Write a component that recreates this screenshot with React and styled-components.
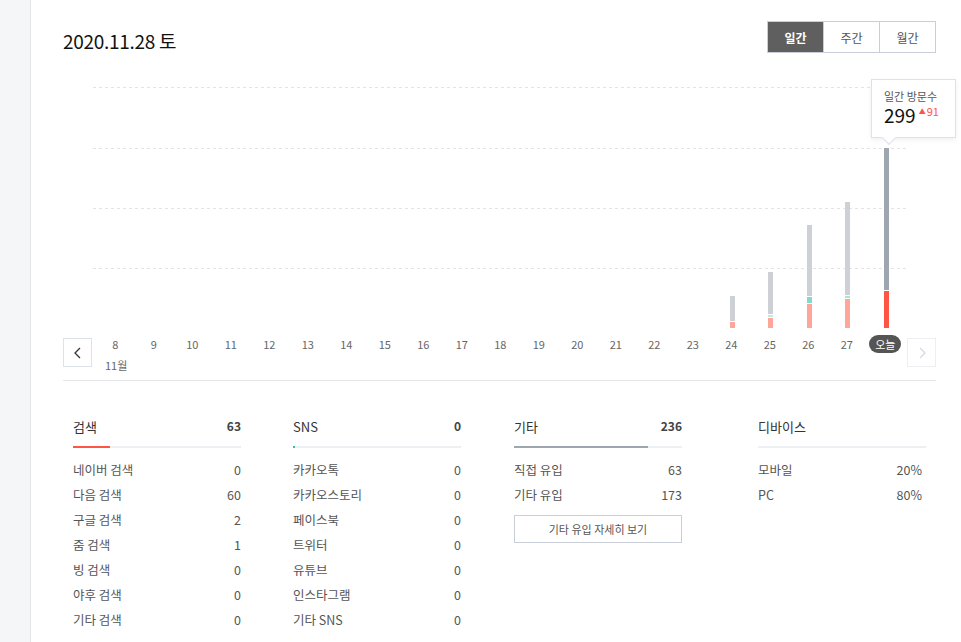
import React from "react";
import styled, { createGlobalStyle } from "styled-components";

const Global = createGlobalStyle`
  body { margin: 0; background: #fff; font-family: "Noto Sans CJK KR", "Noto Sans", sans-serif; color: #333; }
`;

const Page = styled.div`
  display: flex;
  height: 642px;
  overflow: hidden;
`;

const Side = styled.div`
  width: 30px;
  background: #f5f6f8;
  border-right: 1px solid #e4e6ea;
`;

const Main = styled.div`
  width: 873px;
  padding: 21px 0 0 32px;
`;

const Head = styled.div`
  display: flex;
  justify-content: space-between;
  align-items: flex-start;
`;

const Title = styled.h1`
  margin: 6px 0 0;
  font-size: 19px;
  font-weight: 400;
  color: #111;
  letter-spacing: -0.3px;
`;

const Toggle = styled.div`
  display: flex;
  border: 1px solid #c9ced8;
`;

const ToggleBtn = styled.div`
  width: 55px;
  height: 30px;
  display: flex;
  align-items: center;
  justify-content: center;
  font-size: 12px;
  background: ${(p) => (p.$on ? "#5f5f5f" : "#fff")};
  color: ${(p) => (p.$on ? "#fff" : "#555")};
  font-weight: ${(p) => (p.$on ? 700 : 400)};
  & + & { border-left: 1px solid #c9ced8; }
`;

const Chart = styled.div`
  position: relative;
  margin: 33px 0 0 30px;
  padding-left: 4px;
  width: 810px;
  height: 241px;
  background: repeating-linear-gradient(to right, #e2e4e8 0 3px, transparent 3px 6px) 0 0 / 100% 1px no-repeat,
    repeating-linear-gradient(to right, #e2e4e8 0 3px, transparent 3px 6px) 0 61px / 100% 1px no-repeat,
    repeating-linear-gradient(to right, #e2e4e8 0 3px, transparent 3px 6px) 0 121px / 100% 1px no-repeat,
    repeating-linear-gradient(to right, #e2e4e8 0 3px, transparent 3px 6px) 0 181px / 100% 1px no-repeat;
  display: flex;
  align-items: flex-end;
`;

const Col = styled.div`
  width: 38.5px;
  display: flex;
  justify-content: center;
`;

const Bar = styled.div`
  width: 5px;
  display: flex;
  flex-direction: column;
`;

const Seg = styled.div`
  background: ${(p) => p.$c};
  & + & { margin-top: 1px; }
`;

const Tip = styled.div`
  position: absolute;
  right: -49px;
  top: -8px;
  width: 85px;
  height: 59px;
  box-sizing: border-box;
  border: 1px solid #dde1e8;
  background: #fff;
  box-shadow: 0 2px 5px rgba(0,0,0,0.06);
  padding: 9px 0 0 12px;
  &::after {
    content: "";
    position: absolute;
    left: 12px;
    bottom: -6px;
    width: 9px;
    height: 9px;
    background: #fff;
    border-right: 1px solid #dde1e8;
    border-bottom: 1px solid #dde1e8;
    transform: rotate(45deg);
  }
`;

const TipLabel = styled.div`
  font-size: 11px;
  color: #555;
  line-height: 14px;
`;

const TipVal = styled.div`
  display: flex;
  align-items: flex-start;
  gap: 3px;
  font-size: 19px;
  color: #111;
  line-height: 24px;
`;

const Delta = styled.span`
  font-size: 11px;
  color: #ff5544;
  line-height: 16px;
  i { font-style: normal; font-size: 7px; vertical-align: 2px; margin-right: 1px; }
`;

const Axis = styled.div`
  display: flex;
  align-items: flex-start;
  height: 42px;
  border-bottom: 1px solid #e4e6ea;
  margin-top: 10px;
`;

const Nav = styled.div`
  width: 28px;
  height: 27px;
  border: 1px solid ${(p) => (p.$dim ? "#eceef2" : "#dde1e8")};
  display: flex;
  align-items: center;
  justify-content: center;
  color: ${(p) => (p.$dim ? "#d6dae0" : "#333")};
`;

const Days = styled.div`
  display: flex;
  width: 815px;
  margin-top: -2px;
  padding-left: 4px;
  box-sizing: border-box;
`;

const Day = styled.div`
  width: 38.5px;
  text-align: center;
  font-size: 11px;
  color: #666;
  line-height: 16px;
`;

const Month = styled.div`
  font-size: 11px;
  color: #666;
  margin: 4px 0 0 13px;
`;

const Today = styled.div`
  display: inline-block;
  background: #555;
  color: #fff;
  border-radius: 9px;
  padding: 0 6px;
  font-size: 11px;
  line-height: 18px;
  margin-top: -3px;
`;

const Stats = styled.div`
  display: flex;
  padding: 36px 0 0 10px;
`;

const Group = styled.div`
  width: 168px;
  margin-right: ${(p) => p.$mr}px;
`;

const GroupHead = styled.div`
  display: flex;
  justify-content: space-between;
  font-size: 13px;
  color: #333;
  height: 29px;
  b { font-weight: 700; font-size: 12px; color: #444; }
`;

const Track = styled.div`
  height: 2px;
  background: #eeeff2;
  margin: 0 0 9px;
`;

const Fill = styled.div`
  height: 2px;
  background: ${(p) => p.$c};
`;

const Row = styled.div`
  display: flex;
  justify-content: space-between;
  font-size: 12.5px;
  color: #555;
  line-height: 25px;
  padding-right: ${(p) => (p.$pr ? 4 : 0)}px;
`;

const More = styled.div`
  margin-top: 8px;
  height: 26px;
  border: 1px solid #c9ced8;
  display: flex;
  align-items: center;
  justify-content: center;
  font-size: 11px;
  color: #555;
`;

const bars = {
  24: [["#cdd1d6", 25], ["#ffa59a", 6]],
  25: [["#cdd1d6", 42], ["#b9ece4", 2], ["#ffa59a", 10]],
  26: [["#cdd1d6", 71], ["#7fdccc", 6], ["#ffa59a", 24]],
  27: [["#cdd1d6", 93], ["#a5e5da", 2], ["#ffa59a", 29]],
  28: [["#9ea6b0", 142], ["#ff5544", 37]],
};

const days = Array.from({ length: 20 }, (_, i) => i + 8);

const groups = [
  { name: "검색", total: "63", fill: "#ff5544", pct: 22, mr: 52, rows: [["네이버 검색", "0"], ["다음 검색", "60"], ["구글 검색", "2"], ["줌 검색", "1"], ["빙 검색", "0"], ["야후 검색", "0"], ["기타 검색", "0"]] },
  { name: "SNS", total: "0", fill: "#2bc4a8", pct: 1, mr: 53, rows: [["카카오톡", "0"], ["카카오스토리", "0"], ["페이스북", "0"], ["트위터", "0"], ["유튜브", "0"], ["인스타그램", "0"], ["기타 SNS", "0"]] },
  { name: "기타", total: "236", fill: "#9ea6b0", pct: 80, mr: 76, rows: [["직접 유입", "63"], ["기타 유입", "173"]], more: true },
  { name: "디바이스", total: "", fill: "#eeeff2", pct: 0, mr: 0, pr: true, rows: [["모바일", "20%"], ["PC", "80%"]] },
];

export default function App() {
  return (
    <Page>
      <Global />
      <Side />
      <Main>
        <Head>
          <Title>2020.11.28 토</Title>
          <Toggle>
            <ToggleBtn $on>일간</ToggleBtn>
            <ToggleBtn>주간</ToggleBtn>
            <ToggleBtn>월간</ToggleBtn>
          </Toggle>
        </Head>
        <Chart>
          {[...days, 28].map((d) => (
            <Col key={d}>
              {bars[d] && (
                <Bar>
                  {bars[d].map(([c, h], i) => (
                    <Seg key={i} $c={c} style={{ height: h }} />
                  ))}
                </Bar>
              )}
            </Col>
          ))}
          <Tip>
            <TipLabel>일간 방문수</TipLabel>
            <TipVal>299<Delta><i>▲</i>91</Delta></TipVal>
          </Tip>
        </Chart>
        <Axis>
          <Nav>
            <svg width="10" height="12" viewBox="0 0 10 12"><path d="M7 1 L2 6 L7 11" fill="none" stroke="currentColor" strokeWidth="1.3" /></svg>
          </Nav>
          <div>
            <Days>
              {days.map((d) => <Day key={d}>{d}</Day>)}
              <Day><Today>오늘</Today></Day>
            </Days>
            <Month>11월</Month>
          </div>
          <Nav $dim>
            <svg width="10" height="12" viewBox="0 0 10 12"><path d="M3 1 L8 6 L3 11" fill="none" stroke="currentColor" strokeWidth="1.3" /></svg>
          </Nav>
        </Axis>
        <Stats>
          {groups.map((g) => (
            <Group key={g.name} $mr={g.mr}>
              <GroupHead><span>{g.name}</span><b>{g.total}</b></GroupHead>
              <Track><Fill $c={g.fill} style={{ width: `${g.pct}%` }} /></Track>
              {g.rows.map(([k, v]) => (
                <Row key={k} $pr={g.pr}><span>{k}</span><span>{v}</span></Row>
              ))}
              {g.more && <More>기타 유입 자세히 보기</More>}
            </Group>
          ))}
        </Stats>
      </Main>
    </Page>
  );
}
